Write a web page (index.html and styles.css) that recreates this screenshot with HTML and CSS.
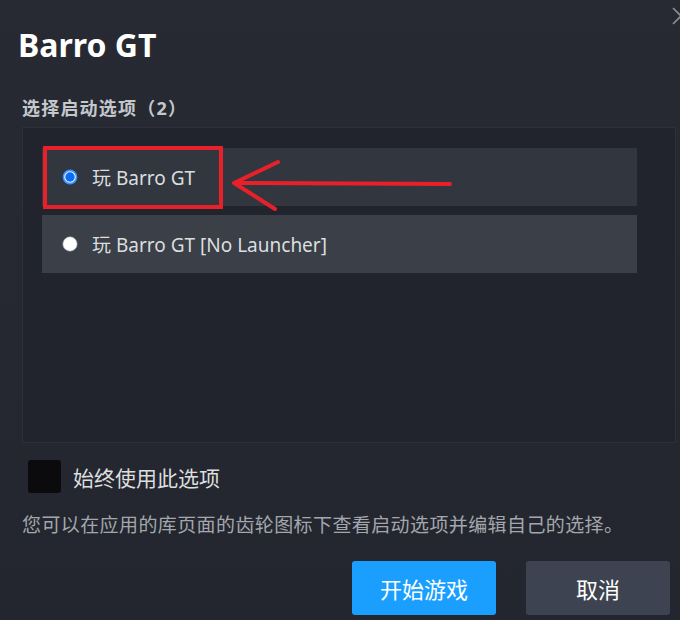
FILE: index.html
```html
<!DOCTYPE html>
<html lang="zh-CN">
<head>
  <meta charset="UTF-8" />
  <meta name="viewport" content="width=device-width, initial-scale=1.0"/>
  <title>Barro GT</title>
  <link rel="stylesheet" href="styles.css">
</head>
<body>
  <div class="dialog">
    <button class="close" aria-label="关闭">
      <svg width="20" height="20" viewBox="0 0 20 20"><path d="M2 2 L18 18 M18 2 L2 18" stroke="#8a9099" stroke-width="1.6" fill="none"/></svg>
    </button>
    <h1 class="title">Barro GT</h1>
    <p class="subtitle">选择启动选项（2）</p>
    <div class="options">
      <div class="option selected">
        <span class="radio">
          <svg width="16" height="16" viewBox="0 0 16 16">
            <circle cx="8" cy="8" r="7.4" fill="#3a93ff"/>
            <circle cx="8" cy="8" r="5.8" fill="#e6f0ff"/>
            <circle cx="8" cy="8" r="4.7" fill="#0b6cf2"/>
          </svg>
        </span>
        <span class="option-text">玩 Barro GT</span>
      </div>
      <div class="option hover">
        <span class="radio">
          <svg width="16" height="16" viewBox="0 0 16 16">
            <circle cx="8" cy="8" r="7.2" fill="#ffffff" stroke="#9aa0a8" stroke-width="0.6"/>
          </svg>
        </span>
        <span class="option-text">玩 Barro GT [No Launcher]</span>
      </div>
      <!-- red annotation drawn over the screenshot -->
      <div class="mark-box"></div>
      <svg class="mark-arrow" width="230" height="60" viewBox="0 0 230 60">
        <path d="M4 28 L220 29 M4 28 L48 7 M4 28 L45 54" stroke="#e8202a" stroke-width="4" stroke-linecap="round" fill="none"/>
      </svg>
    </div>
    <label class="always">
      <span class="checkbox"></span>
      <span>始终使用此选项</span>
    </label>
    <p class="hint">您可以在应用的库页面的齿轮图标下查看启动选项并编辑自己的选择。</p>
    <div class="actions">
      <button class="btn primary">开始游戏</button>
      <button class="btn">取消</button>
    </div>
  </div>
</body>
</html>
```

FILE: styles.css
```css
body {
  margin: 0;
  background: #24272f;
  font-family: "Noto Sans", "Noto Sans CJK SC", sans-serif;
  color: #dcdedf;
}
.dialog {
  position: relative;
  width: 680px;
  height: 620px;
  box-sizing: border-box;
  padding: 25px 0 0 22px;
  background: linear-gradient(180deg, #272a33 0%, #23262e 100%);
  overflow: hidden;
}
.close {
  position: absolute;
  top: 6px;
  right: -11px;
  padding: 0;
  border: none;
  background: none;
}
.title {
  margin: 0 0 0 -4px;
  font-size: 32px;
  line-height: 40px;
  font-weight: bold;
  color: #ffffff;
}
.subtitle {
  margin: 31px 0 0;
  font-size: 18px;
  line-height: 24px;
  font-weight: bold;
  color: #c4c7cc;
  letter-spacing: 1.2px;
}
.options {
  position: relative;
  margin-top: 7px;
  width: 654px;
  height: 316px;
  box-sizing: border-box;
  padding: 20px 38px 0 19px;
  background: #21242c;
  border: 1px solid #2d3039;
  display: flex;
  flex-direction: column;
  gap: 9px;
}
.option {
  height: 58px;
  display: flex;
  align-items: center;
  padding-left: 20px;
  background: #32363f;
}
.option.hover {
  background: #3a3f48;
}
.radio {
  display: flex;
  width: 16px;
  height: 16px;
  margin-right: 14px;
}
.option-text {
  font-size: 19px;
  color: #dcdedf;
}
.mark-box {
  position: absolute;
  left: 20px;
  top: 18px;
  width: 172px;
  height: 55px;
  border: 4px solid #e8202a;
}
.mark-arrow {
  position: absolute;
  left: 207px;
  top: 27px;
}
.always {
  display: flex;
  align-items: center;
  margin: 17px 0 0 6px;
  font-size: 21px;
  color: #dcdedf;
}
.checkbox {
  width: 33px;
  height: 33px;
  border-radius: 3px;
  background: #0b0b0e;
  margin-right: 12px;
}
.hint {
  margin: 19px 0 0;
  font-size: 19px;
  line-height: 26px;
  color: #a3a7ad;
  letter-spacing: 0.4px;
}
.actions {
  display: flex;
  justify-content: flex-end;
  gap: 30px;
  margin-top: 23px;
  padding-right: 10px;
}
.btn {
  width: 144px;
  height: 54px;
  border: none;
  border-radius: 3px;
  background: #3d4350;
  color: #ffffff;
  font-family: "Noto Sans", "Noto Sans CJK SC", sans-serif;
  font-size: 22px;
}
.btn.primary {
  background: #1a9fff;
}
```
